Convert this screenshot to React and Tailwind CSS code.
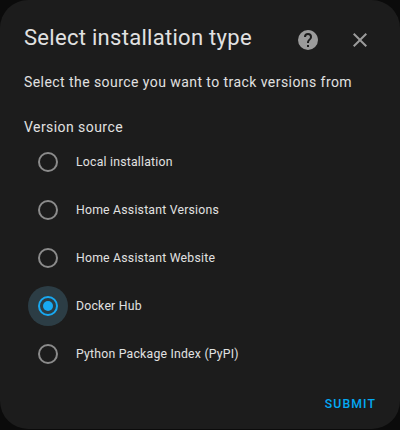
const sources = [
  'Local installation',
  'Home Assistant Versions',
  'Home Assistant Website',
  'Docker Hub',
  'Python Package Index (PyPI)',
];

function Radio({ label, checked }) {
  return (
    <label className="flex h-12 items-center pl-1">
      <span className={`flex size-10 items-center justify-center rounded-full ${checked ? 'bg-[#2c3d45]' : ''}`}>
        <span className={`flex size-5 items-center justify-center rounded-full border-2 ${checked ? 'border-[#18a9f2]' : 'border-[#8b8b8b]'}`}>
          {checked && <span className="size-2.5 rounded-full bg-[#18a9f2]" />}
        </span>
      </span>
      <span className="ml-2 text-[12.25px] leading-4 tracking-[0.0178571em]">{label}</span>
    </label>
  );
}

export default function App() {
  return (
    <div className="h-[430px] w-[400px] overflow-hidden bg-[#0b0b0b] font-['Roboto',sans-serif] text-[#e1e1e1]">
      <div className="flex h-[429px] flex-col rounded-[28px] bg-[#1c1c1c] px-6">
        <header className="flex h-[72px] shrink-0 items-center justify-between pt-1">
          <h1 className="whitespace-nowrap text-[22.04px] leading-7 tracking-[0.0125em]">Select installation type</h1>
          <div className="flex items-center gap-7 pr-1 pt-1 text-[#9b9b9b]">
            <svg className="size-6" viewBox="0 0 24 24" fill="currentColor">
              <path d="M15.07,11.25L14.17,12.17C13.45,12.89 13,13.5 13,15H11V14.5C11,13.39 11.45,12.39 12.17,11.67L13.41,10.41C13.78,10.05 14,9.55 14,9C14,7.89 13.1,7 12,7A2,2 0 0,0 10,9H8A4,4 0 0,1 12,5A4,4 0 0,1 16,9C16,9.88 15.64,10.67 15.07,11.25M13,19H11V17H13M12,2A10,10 0 0,0 2,12A10,10 0 0,0 12,22A10,10 0 0,0 22,12C22,6.47 17.5,2 12,2Z" />
            </svg>
            <svg className="size-6" viewBox="0 0 24 24" fill="currentColor">
              <path d="M19,6.41L17.59,5L12,10.59L6.41,5L5,6.41L10.59,12L5,17.59L6.41,19L12,13.41L17.59,19L19,17.59L13.41,12L19,6.41Z" />
            </svg>
          </div>
        </header>
        <p className="whitespace-nowrap text-sm leading-5 tracking-[0.03125em]">Select the source you want to track versions from</p>
        <p className="mt-[25px] text-sm leading-5 tracking-[0.03125em]">Version source</p>
        <div className="mt-px">
          {sources.map((s) => (
            <Radio key={s} label={s} checked={s === 'Docker Hub'} />
          ))}
        </div>
        <div className="mt-[18px] flex justify-end">
          <button className="text-[12.25px] font-medium leading-4 tracking-[0.0892857em] text-[#03a9f4]">SUBMIT</button>
        </div>
      </div>
    </div>
  );
}
